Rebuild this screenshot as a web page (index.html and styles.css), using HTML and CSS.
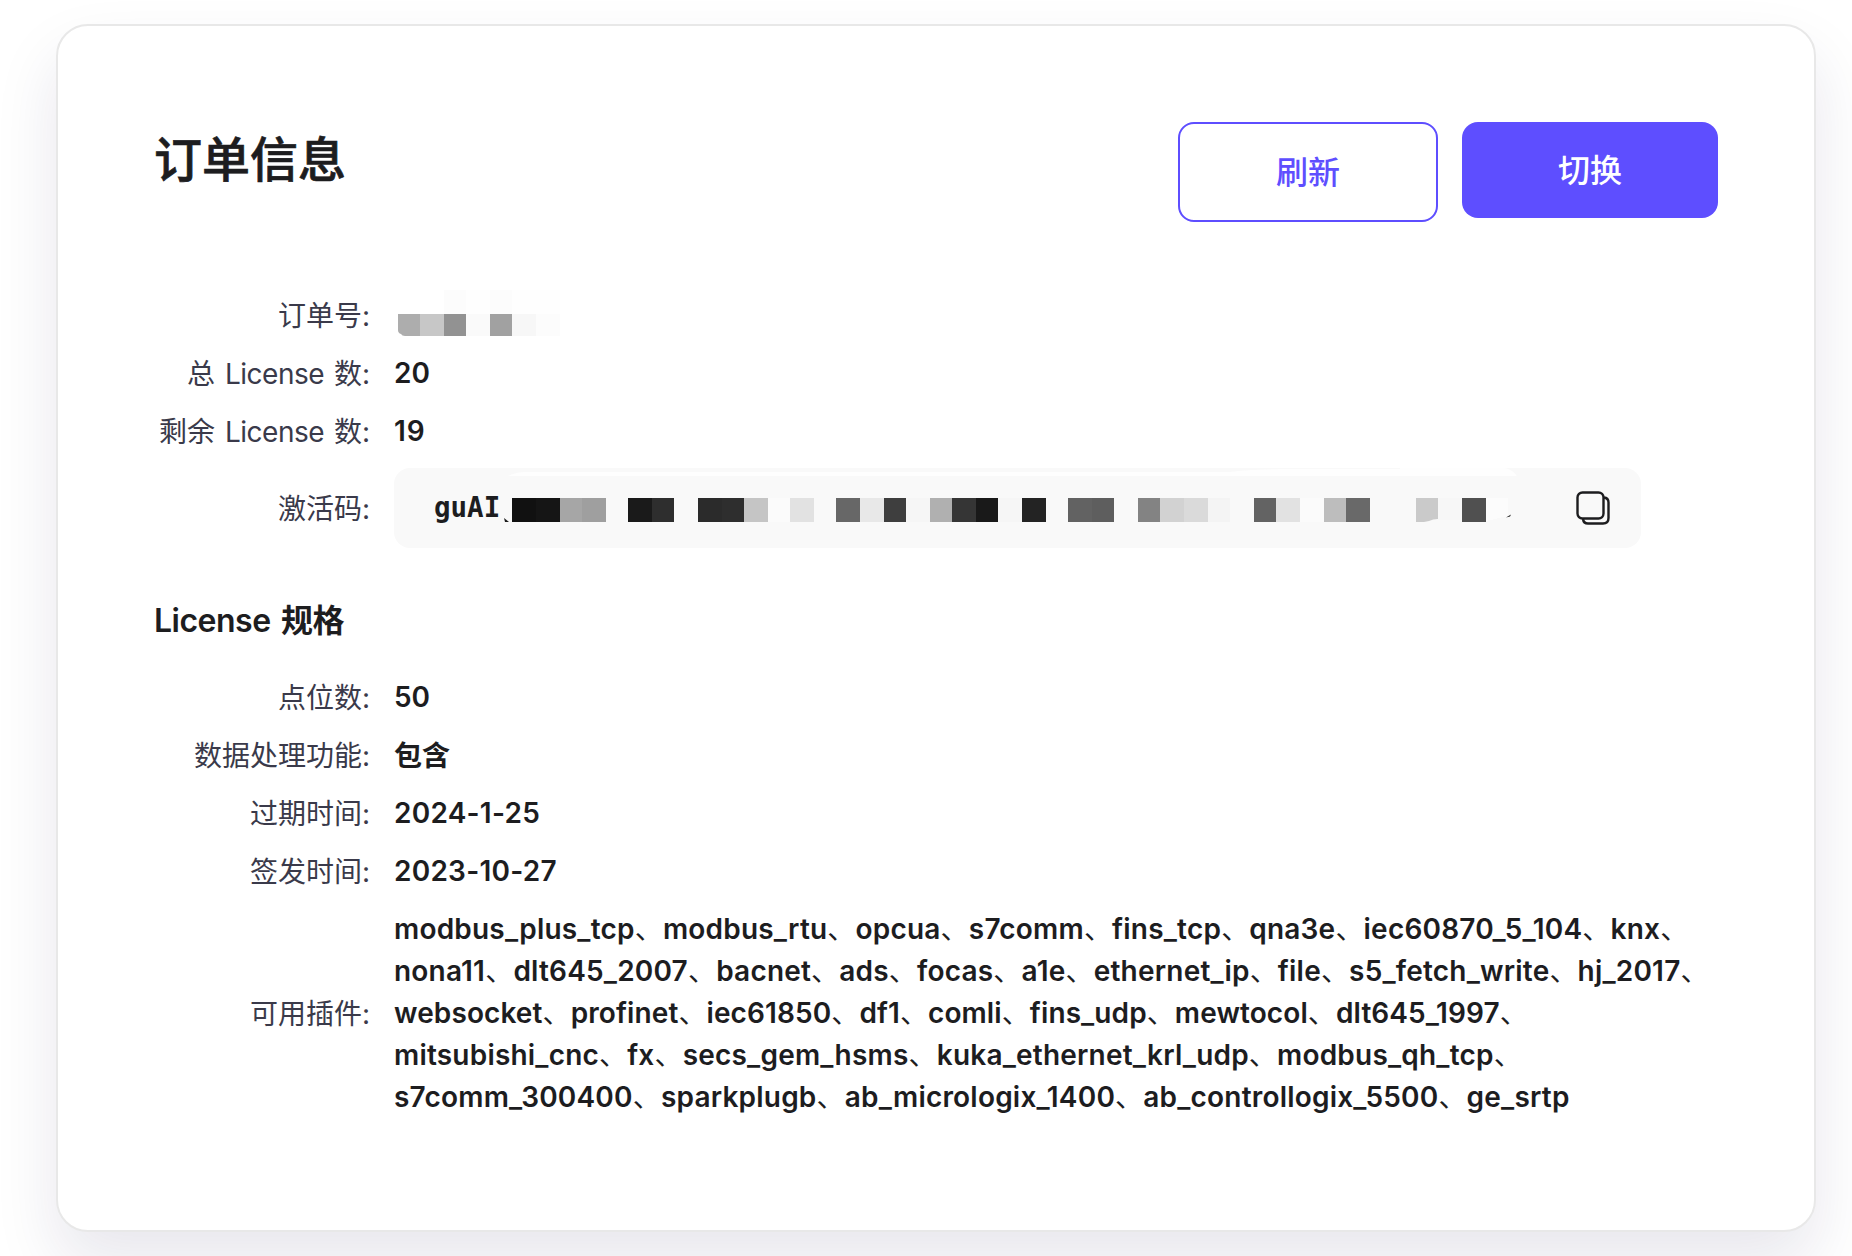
FILE: index.html
```html
<!DOCTYPE html>
<html lang="zh-CN">
<head>
<meta charset="utf-8">
<title>订单信息</title>
<link rel="stylesheet" href="styles.css">
</head>
<body>
<main class="card">
  <header class="card-header">
    <h1 class="title">订单信息</h1>
    <div class="actions">
      <button class="btn btn-outline">刷新</button>
      <button class="btn btn-primary">切换</button>
    </div>
  </header>
  <dl class="info">
    <div class="row"><dt>订单号:</dt><dd class="masked">
      <svg class="mask" width="170" height="58" viewBox="394 286 170 58" shape-rendering="crispEdges">
        <path fill="#fcfcfc" d="M444 290h22v24h-22zM490 290h22v24h-22z"/>
        <path fill="#fefefe" d="M466 290h24v24h-24zM512 290h48v24h-48z"/>
        <path fill="#adadad" shape-rendering="auto" d="M398 314h22v22h-15q-3 0-4-2q-3-1-3-4z"/>
        <path fill="#c7c7c7" d="M420 314h24v22h-24z"/>
        <path fill="#929292" d="M444 314h22v22h-22z"/>
        <path fill="#fafafa" d="M466 314h24v22h-24z"/>
        <path fill="#a1a1a1" d="M490 314h22v22h-22z"/>
        <path fill="#f7f7f7" d="M512 314h24v22h-24z"/>
        <path fill="#fcfcfc" d="M536 314h24v22h-24z"/>
      </svg></dd></div>
    <div class="row"><dt>总 <span class="latin">License</span> 数:</dt><dd class="value">20</dd></div>
    <div class="row"><dt>剩余 <span class="latin">License</span> 数:</dt><dd class="value wide">19</dd></div>
    <div class="row row-code"><dt>激活码:</dt><dd class="code">
      <span class="code-text">guAI</span>
      <svg class="code-mask" width="1013" height="80" viewBox="504 468 1013 80" shape-rendering="crispEdges">
        <path fill="#fefefe" shape-rendering="auto" d="M508 476q8-4 18-4H1230q20-3 60-3H1400V468h105q8 2 12 8z"/>
        <path fill="#1c1c1c" shape-rendering="auto" d="M504 518l5 4h-4zM1506 517.500l5-3-1 2z"/>
        <path fill="#111" d="M512 498h24v24h-24z"/><path fill="#151515" d="M536 498h24v24h-24z"/>
        <path fill="#a6a6a6" d="M560 498h22v24h-22z"/><path fill="#9f9f9f" d="M582 498h24v24h-24z"/>
        <path fill="#1a1a1a" d="M628 498h24v24h-24z"/><path fill="#2e2e2e" d="M652 498h22v24h-22z"/>
        <path fill="#2b2b2b" d="M698 498h24v24h-24z"/><path fill="#2e2e2e" d="M722 498h22v24h-22z"/>
        <path fill="#c5c5c5" d="M744 498h24v24h-24z"/><path fill="#fbfbfb" d="M768 498h22v24h-22z"/>
        <path fill="#e2e2e2" d="M790 498h24v24h-24z"/><path fill="#676767" d="M836 498h24v24h-24z"/>
        <path fill="#e8e8e8" d="M860 498h24v24h-24z"/><path fill="#3e3e3e" d="M884 498h22v24h-22z"/>
        <path fill="#f6f6f6" d="M906 498h24v24h-24z"/><path fill="#b0b0b0" d="M930 498h22v24h-22z"/>
        <path fill="#353535" d="M952 498h24v24h-24z"/><path fill="#191919" d="M976 498h22v24h-22z"/>
        <path fill="#f6f6f6" d="M998 498h24v24h-24z"/><path fill="#232323" d="M1022 498h24v24h-24z"/>
        <path fill="#626262" d="M1068 498h24v24h-24z"/><path fill="#5e5e5e" d="M1092 498h22v24h-22z"/>
        <path fill="#838383" d="M1138 498h22v24h-22z"/><path fill="#d2d2d2" d="M1160 498h24v24h-24z"/>
        <path fill="#dadada" d="M1184 498h24v24h-24z"/><path fill="#f4f4f4" d="M1208 498h22v24h-22z"/>
        <path fill="#636363" d="M1254 498h22v24h-22z"/><path fill="#e2e2e2" d="M1276 498h24v24h-24z"/>
        <path fill="#fbfbfb" d="M1300 498h24v24h-24z"/><path fill="#bdbdbd" d="M1324 498h22v24h-22z"/>
        <path fill="#696969" d="M1346 498h24v24h-24z"/>
        <path fill="#cacaca" shape-rendering="auto" d="M1416 498h22v21q-5 0-9 2l-5 1h-8z"/>
        <path fill="#f7f7f7" d="M1438 498h24v22h-24z"/>
        <path fill="#505050" d="M1462 498h24v24h-24z"/><path fill="#fcfcfc" d="M1486 498h22v18l-22 5z"/>
      </svg>
      <svg class="copy" width="34" height="34" viewBox="0 0 34 34" fill="none" stroke="#1d1d1f" stroke-width="2.400">
        <rect x="1.500" y="1.500" width="26" height="26" rx="5"/>
        <path d="M28 6.500q4.500 .5 4.500 5V27q0 5.500-5.500 5.500H12Q7.500 32.500 7 28"/>
      </svg></dd></div>
  </dl>
  <h2 class="subtitle">License 规格</h2>
  <dl class="info">
    <div class="row"><dt>点位数:</dt><dd class="value">50</dd></div>
    <div class="row"><dt>数据处理功能:</dt><dd>包含</dd></div>
    <div class="row"><dt>过期时间:</dt><dd class="value date">2024-1-25</dd></div>
    <div class="row"><dt>签发时间:</dt><dd class="value date">2023-10-27</dd></div>
    <div class="row"><dt>可用插件:</dt><dd class="value plugins">
      <span>modbus_plus_tcp<i>、</i>modbus_rtu<i>、</i>opcua<i>、</i>s7comm<i>、</i>fins_tcp<i>、</i>qna3e<i>、</i>iec60870_5_104<i>、</i>knx<i>、</i></span>
      <span>nona11<i>、</i>dlt645_2007<i>、</i>bacnet<i>、</i>ads<i>、</i>focas<i>、</i>a1e<i>、</i>ethernet_ip<i>、</i>file<i>、</i>s5_fetch_write<i>、</i>hj_2017<i>、</i></span>
      <span>websocket<i>、</i>profinet<i>、</i>iec61850<i>、</i>df1<i>、</i>comli<i>、</i>fins_udp<i>、</i>mewtocol<i>、</i>dlt645_1997<i>、</i></span>
      <span>mitsubishi_cnc<i>、</i>fx<i>、</i>secs_gem_hsms<i>、</i>kuka_ethernet_krl_udp<i>、</i>modbus_qh_tcp<i>、</i></span>
      <span>s7comm_300400<i>、</i>sparkplugb<i>、</i>ab_micrologix_1400<i>、</i>ab_controllogix_5500<i>、</i>ge_srtp</span>
    </dd></div>
  </dl>
</main>
</body>
</html>
```
FILE: styles.css
```css
* { box-sizing: border-box; }
body {
  margin: 0;
  height: 1256px;
  padding: 24px 36px 24px 56px;
  overflow: hidden;
  background: #fff;
  color: #1d1d1f;
  font-family: Inter, "Noto Sans CJK SC", sans-serif;
  font-size: 28px;
  line-height: 42px;
}
.card {
  height: 1208px;
  padding: 96px;
  border: 2px solid #e8e8e8;
  border-radius: 32px;
  background: #fff;
  box-shadow: 0 32px 64px rgba(26, 21, 80, .1);
}
.card-header { display: flex; justify-content: space-between; align-items: flex-start; height: 165px; }
.title {
  margin: 0;
  padding-top: 2px;
  font-size: 48px;
  font-weight: 500;
  line-height: 72px;
  -webkit-text-stroke: .7px currentColor;
}
.actions { display: flex; align-items: flex-start; gap: 24px; }
.btn {
  width: 256px;
  height: 96px;
  padding: 2px 0 0;
  border: 0;
  border-radius: 16px;
  font: 500 32px/48px Inter, "Noto Sans CJK SC", sans-serif;
}
.btn-outline { width: 260px; height: 100px; border: 2px solid #5e4eff; background: #fff; color: #5e4eff; }
.btn-primary { background: #5e4eff; color: #fff; }
.info { margin: 0; }
.row { display: flex; align-items: center; padding: 8px 0; }
.row-code { padding: 7px 0 9px; }
.row-code dt { padding-top: 2px; }
dt { width: 216px; margin-right: 24px; flex: none; text-align: right; color: #3a3a4a; white-space: nowrap; }
dd { margin: 0; font-weight: 600; white-space: nowrap; }
.value { margin: -1px 0 1px; }
.latin { margin: 0 2px; letter-spacing: -.5px; }
.wide { letter-spacing: 1px; }
.date { letter-spacing: .25px; }
.plugins span { display: block; height: 42px; letter-spacing: .2px; }
.plugins span:nth-child(3) { letter-spacing: .1px; }
.plugins i { font-style: normal; font-weight: 400; }
.masked { height: 42px; }
.mask { display: block; margin-top: -9px; }
.code {
  display: flex;
  align-items: center;
  width: 1247px;
  height: 80px;
  padding-left: 40px;
  border-radius: 16px;
  background: #f9f9f9;
}
.code-text { width: 70px; padding-bottom: 2px; font-family: "DejaVu Sans Mono", monospace; font-weight: 700; font-size: 27.500px; }
.code-mask { flex: none; }
.copy { margin-left: 59px; }
.subtitle { margin: 40px 0 24px; font-size: 32px; font-weight: 600; line-height: 48px; letter-spacing: -.5px; word-spacing: 2.800px; }
```
